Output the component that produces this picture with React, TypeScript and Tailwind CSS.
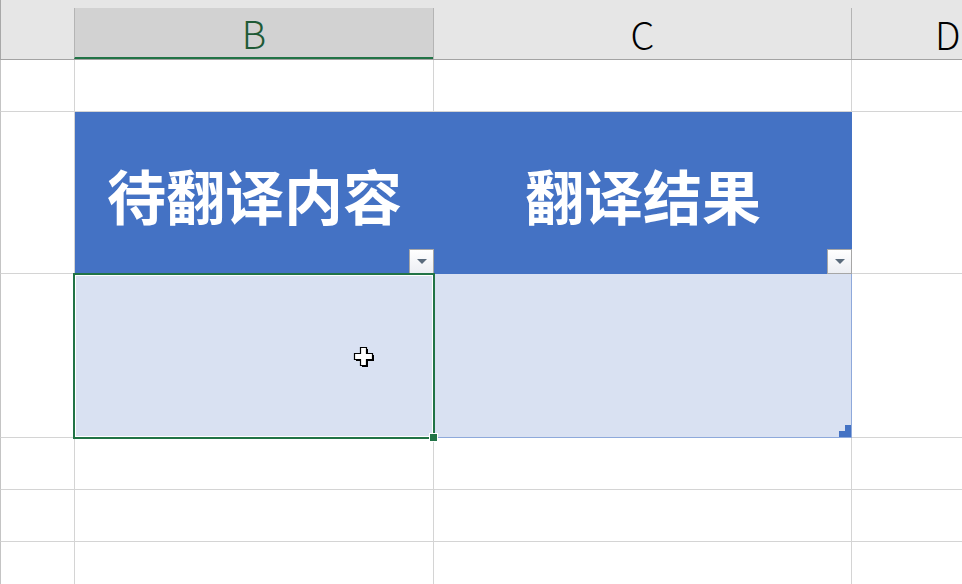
import React from "react";

const GRID = "border-[#d4d4d4]";

function Dropdown() {
  return (
    <div className="absolute right-0 bottom-0 w-[25px] h-[25px] border border-[#a6a6a6] bg-gradient-to-b from-white to-[#eceef3] flex items-center justify-center">
      <svg width="10" height="6" viewBox="0 0 10 6">
        <polygon points="0,0 10,0 5,5" fill="#5a6b7c" />
      </svg>
    </div>
  );
}

export default function App() {
  const font = { fontFamily: '"Noto Sans CJK SC", "Noto Sans", sans-serif' };
  return (
    <div className="relative w-[962px] h-[584px] overflow-hidden bg-white" style={font}>
      {/* header */}
      <div className="flex h-[60px] bg-[#e6e6e6] border-b border-[#a3a3a3]">
        <div className="w-[74px] shrink-0 border-l border-[#a8a8a8]" />
        <div className="w-[359px] shrink-0 mt-[8px] bg-[#d2d2d2] border-l border-[#b4b4b4] border-b-2 border-b-[#217346] flex items-center justify-center">
          <span className="text-[38px] font-light text-[#1e5a36] leading-none pt-[1px]">B</span>
        </div>
        <div className="w-[418px] shrink-0 mt-[8px] border-l border-[#b4b4b4] flex items-center justify-center">
          <span className="text-[38px] font-light text-black leading-none">C</span>
        </div>
        <div className="flex-1 mt-[8px] border-l border-[#b4b4b4] flex items-center pl-[83px]">
          <span className="text-[38px] font-light text-black leading-none">D</span>
        </div>
      </div>

      {/* row 1 */}
      <div className="flex h-[52px]">
        <div className={`w-[75px] shrink-0 border-l border-r border-b ${GRID} border-l-[#c4c4c4]`} />
        <div className={`w-[359px] shrink-0 border-r border-b ${GRID}`} />
        <div className={`w-[418px] shrink-0 border-r border-b ${GRID}`} />
        <div className={`flex-1 border-b ${GRID}`} />
      </div>

      {/* row 2 - table header */}
      <div className="flex h-[162px]">
        <div className={`w-[75px] shrink-0 border-l border-r border-b ${GRID} border-l-[#c4c4c4]`} />
        <div className="relative w-[359px] shrink-0 bg-[#4472c4] flex items-center justify-center">
          <span className="text-[59px] font-semibold text-white leading-none mt-[2px]">待翻译内容</span>
          <Dropdown />
        </div>
        <div className="relative w-[418px] shrink-0 bg-[#4472c4] flex items-center justify-center">
          <span className="text-[59px] font-semibold text-white leading-none mt-[2px]">翻译结果</span>
          <Dropdown />
        </div>
        <div className={`flex-1 border-b ${GRID}`} />
      </div>

      {/* row 3 - data */}
      <div className="flex h-[164px]">
        <div className={`w-[75px] shrink-0 border-l border-r border-b ${GRID} border-l-[#c4c4c4]`} />
        <div className="w-[359px] shrink-0 bg-[#d9e1f2] border-b border-[#8ea9db]" />
        <div className="relative w-[418px] shrink-0 bg-[#d9e1f2] border-r border-b border-[#8ea9db]">
          <div className="absolute right-0 bottom-0 w-[6px] h-[12px] bg-[#4472c4]" />
          <div className="absolute right-[6px] bottom-0 w-[6px] h-[6px] bg-[#4472c4]" />
        </div>
        <div className={`flex-1 border-b ${GRID}`} />
      </div>

      {/* rows 4-6 */}
      {[0, 1, 2].map((i) => (
        <div key={i} className="flex h-[52px]">
          <div className={`w-[75px] shrink-0 border-l border-r border-b ${GRID} border-l-[#c4c4c4]`} />
          <div className={`w-[359px] shrink-0 border-r border-b ${GRID}`} />
          <div className={`w-[418px] shrink-0 border-r border-b ${GRID}`} />
          <div className={`flex-1 border-b ${GRID}`} />
        </div>
      ))}

      {/* selection */}
      <div className="absolute left-[73px] top-[273px] w-[362px] h-[166px] border-2 border-[#217346]">
        <div className="absolute inset-0 border border-white" />
      </div>
      <div className="absolute left-[429px] top-[433px] w-[7px] h-[7px] bg-[#217346] border border-white box-content" />

      {/* cursor */}
      <svg className="absolute left-[353px] top-[346px]" width="24" height="24" viewBox="0 0 24 24">
        <path d="M7.5 1.5h6v6h6v6h-6v6h-6v-6h-6v-6h6z" fill="black" transform="translate(1.5,1.5)" />
        <path d="M7.5 1.5h6v6h6v6h-6v6h-6v-6h-6v-6h6z" fill="white" stroke="black" strokeWidth="1.2" />
      </svg>
    </div>
  );
}
